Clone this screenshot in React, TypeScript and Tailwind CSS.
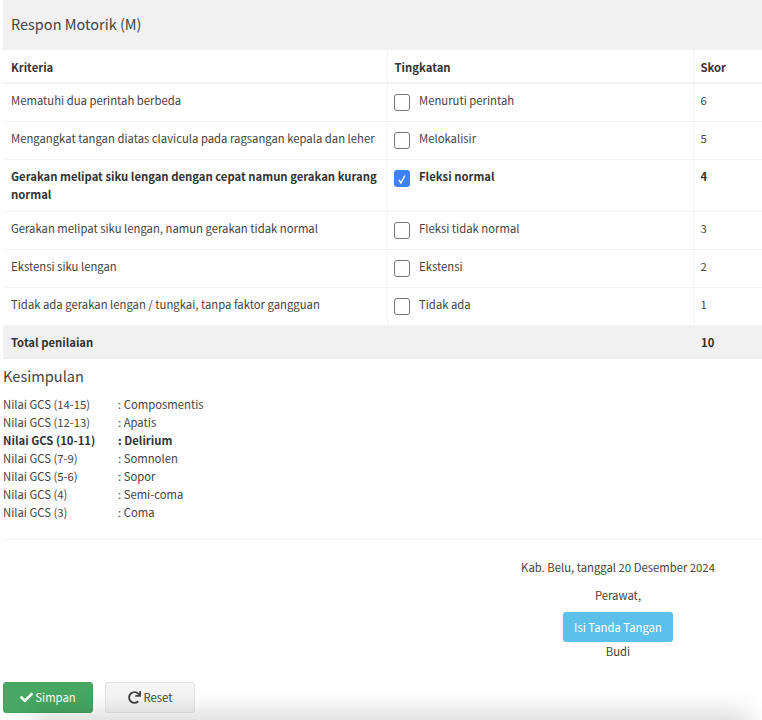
import { FaCheck, FaRedo } from 'react-icons/fa';

const rows = [
  { kriteria: 'Mematuhi dua perintah berbeda', tingkat: 'Menuruti perintah', skor: 6 },
  { kriteria: 'Mengangkat tangan diatas clavicula pada ragsangan kepala dan leher', tingkat: 'Melokalisir', skor: 5 },
  { kriteria: 'Gerakan melipat siku lengan dengan cepat namun gerakan kurang normal', tingkat: 'Fleksi normal', skor: 4, on: true },
  { kriteria: 'Gerakan melipat siku lengan, namun gerakan tidak normal', tingkat: 'Fleksi tidak normal', skor: 3 },
  { kriteria: 'Ekstensi siku lengan', tingkat: 'Ekstensi', skor: 2 },
  { kriteria: 'Tidak ada gerakan lengan / tungkai, tanpa faktor gangguan', tingkat: 'Tidak ada', skor: 1 },
];

const kesimpulan = [
  { nilai: 'Nilai GCS (14-15)', hasil: ': Composmentis' },
  { nilai: 'Nilai GCS (12-13)', hasil: ': Apatis' },
  { nilai: 'Nilai GCS (10-11)', hasil: ': Delirium', on: true },
  { nilai: 'Nilai GCS (7-9)', hasil: ': Somnolen' },
  { nilai: 'Nilai GCS (5-6)', hasil: ': Sopor' },
  { nilai: 'Nilai GCS (4)', hasil: ': Semi-coma' },
  { nilai: 'Nilai GCS (3)', hasil: ': Coma' },
];

function Check({ on }: { on?: boolean }) {
  if (on) {
    return (
      <span className="mb-[2px] mt-[3px] flex h-[17px] w-4 shrink-0 items-center justify-center rounded-[3px] bg-[#3b82f6]">
        <svg viewBox="0 0 16 16" className="h-4 w-4" fill="none" stroke="#fff" strokeWidth="1.5">
          <path d="M5 8.8 L7 12 L10.8 4.5" />
        </svg>
      </span>
    );
  }
  return <span className="mb-[2px] mt-[3px] h-[17px] w-4 shrink-0 rounded-[3px] border border-[#767676] bg-white" />;
}

export default function App() {
  return (
    <div className="relative h-[720px] overflow-hidden bg-white pl-[3px] text-[11.3px] leading-[18px] text-[#444] [font-family:'Noto_Sans_CJK_SC','Noto_Sans',sans-serif]">
      <div className="flex h-[50px] items-center bg-[#f1f1f1] px-2 pb-[2px] text-[14.5px] text-[#444]">Respon Motorik (M)</div>

      <table className="w-full table-fixed border-collapse">
        <colgroup>
          <col className="w-[384px]" />
          <col className="w-[306px]" />
          <col />
        </colgroup>
        <thead>
          <tr className="h-[33px] border-b-2 border-[#f4f4f4] text-left font-bold text-[#333]">
            <th className="px-2 pb-0 pt-[2px] font-bold">Kriteria</th>
            <th className="border-l border-[#f4f4f4] px-[7px] pb-0 pt-[2px] font-bold">Tingkatan</th>
            <th className="border-l border-[#f4f4f4] px-[7px] pb-0 pt-[2px] font-bold">Skor</th>
          </tr>
        </thead>
        <tbody>
          {rows.map((r) => (
            <tr key={r.skor} className={`border-b border-[#f4f4f4] ${r.on ? 'font-bold text-[#333]' : ''}`}>
              <td className="px-2 pb-2 pt-[7px] align-top">{r.kriteria}</td>
              <td className="border-l border-[#f4f4f4] px-[6px] pb-2 pt-[7px] align-top">
                <div className="flex items-start gap-[9.5px]">
                  <Check on={r.on} />
                  <span>{r.tingkat}</span>
                </div>
              </td>
              <td className="border-l border-[#f4f4f4] px-[7px] pb-2 pt-[7px] align-top">{r.skor}</td>
            </tr>
          ))}
        </tbody>
        <tfoot>
          <tr className="h-[33px] bg-[#f1f1f1] font-bold text-[#333]">
            <td className="px-2 pb-[1px]" colSpan={2}>Total penilaian</td>
            <td className="px-2 pb-[1px]">10</td>
          </tr>
        </tfoot>
      </table>

      <div className="mt-[7px] text-[14.6px] leading-[20px] text-[#444]">Kesimpulan</div>
      <div className="mt-[9px]">
        {kesimpulan.map((k) => (
          <div key={k.nilai} className={`flex ${k.on ? 'font-bold text-[#333]' : ''}`}>
            <span className="w-[115px]">{k.nilai}</span>
            <span>{k.hasil}</span>
          </div>
        ))}
      </div>

      <div className="mt-[18px] border-t border-[#f4f4f4]" />

      <div className="ml-[500px] mt-[18px] flex w-[230px] flex-col items-center">
        <div>Kab. Belu, tanggal 20 Desember 2024</div>
        <div className="mt-[10px]">Perawat,</div>
        <div className="mt-2 flex h-[30px] w-[110px] items-center justify-center rounded-[3px] bg-[#5bc0ea] text-white">Isi Tanda Tangan</div>
        <div>Budi</div>
      </div>

      <div className="mt-[22px] flex gap-3">
        <button className="flex h-[31px] w-[90px] items-center justify-center gap-[2px] rounded-[3px] border border-[#43a25f] bg-[#47a763] text-white">
          <FaCheck className="text-[13px]" />
          Simpan
        </button>
        <button className="flex h-[31px] w-[90px] items-center justify-center gap-[3px] rounded-[3px] border border-[#e3e3e3] bg-[#f4f4f4] text-[#444]">
          <FaRedo className="text-[13px]" />
          Reset
        </button>
      </div>

      <div className="absolute bottom-[-20px] left-[40px] right-[20px] h-[20px] shadow-[0_0_24px_8px_rgba(0,0,0,0.15)]" />
    </div>
  );
}
